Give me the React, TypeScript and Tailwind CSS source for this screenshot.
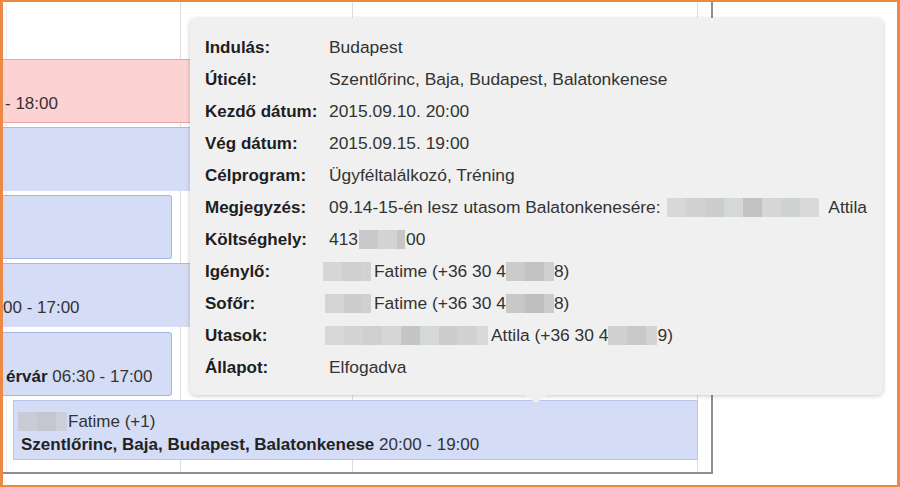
import React from 'react';

// pixelated redaction block
const Blur: React.FC<{ cells: string[]; className?: string }> = ({ cells, className = '' }) => (
  <span className={`inline-flex h-[19px] align-[-4px] ${className}`}>
    {cells.map((c, i) => (
      <span key={i} className="h-full w-[19px] shrink-0" style={{ backgroundColor: c }} />
    ))}
  </span>
);

const rows: { label: string; value: React.ReactNode }[] = [
  { label: 'Indulás:', value: 'Budapest' },
  { label: 'Úticél:', value: 'Szentlőrinc, Baja, Budapest, Balatonkenese' },
  { label: 'Kezdő dátum:', value: '2015.09.10. 20:00' },
  { label: 'Vég dátum:', value: '2015.09.15. 19:00' },
  { label: 'Célprogram:', value: 'Ügyféltalálkozó, Tréning' },
  {
    label: 'Megjegyzés:',
    value: (
      <>
        09.14-15-én lesz utasom Balatonkenesére:{' '}
        <Blur
          cells={['#d8d8d8', '#d2d2d2', '#cdcdcd', '#d4d8d8', '#c2c2c2', '#d6d6d6', '#cfd3d3', '#d9d9d9']}
          className="mx-[2px] w-[155px] overflow-hidden"
        />{' '}
        Attila
      </>
    ),
  },
  {
    label: 'Költséghely:',
    value: (
      <>
        413
        <Blur cells={['#c9c9c9', '#d3d3d3', '#c6c6c6']} className="mx-[1px] w-[46px] overflow-hidden" />
        00
      </>
    ),
  },
  {
    label: 'Igénylő:',
    value: (
      <>
        <Blur cells={['#d6d6d6', '#cfcfcf', '#d2d2d2']} className="-ml-[6px] mr-[3px] w-[48px] overflow-hidden" />
        Fatime (+36 30 4
        <Blur cells={['#cbcbcb', '#c2c2c2', '#cfcfcf']} className="w-[48px] overflow-hidden" />
        8)
      </>
    ),
  },
  {
    label: 'Sofőr:',
    value: (
      <>
        <Blur cells={['#d4d4d4', '#cdcdcd', '#d0d0d0']} className="-ml-[4px] mr-[3px] w-[46px] overflow-hidden" />
        Fatime (+36 30 4
        <Blur cells={['#c8c8c8', '#bfbfbf', '#cccccc']} className="w-[48px] overflow-hidden" />
        8)
      </>
    ),
  },
  {
    label: 'Utasok:',
    value: (
      <>
        <Blur
          cells={['#d8d8d8', '#d3d3d3', '#cfcfcf', '#d6d6d6', '#c5c5c5', '#d4d8d8', '#cdcdcd', '#d2d2d2', '#d9d9d9']}
          className="-ml-[4px] mr-[3px] w-[163px] overflow-hidden"
        />
        Attila (+36 30 4
        <Blur cells={['#d0d0d0', '#c9c9c9', '#d3d3d3']} className="w-[49px] overflow-hidden" />
        9)
      </>
    ),
  },
  { label: 'Állapot:', value: 'Elfogadva' },
];

const App: React.FC = () => {
  return (
    <div className="relative h-[487px] w-[900px] overflow-hidden border-t-2 border-l-[3px] border-r-[3px] border-b-2 border-[#ec8a45] bg-white font-['Liberation_Sans',Arial,sans-serif] text-[17px] leading-[23px]">
      {/* calendar */}
      <div className="relative h-[472px] w-[710px] overflow-hidden border-r-2 border-b-2 border-[#8e8e8e]">
        {/* grid lines */}
        <div className="absolute top-0 bottom-0 left-[3px] w-px bg-[#eeeeee]" />
        <div className="absolute top-0 bottom-0 left-[177px] w-px bg-[#dddddd]" />
        <div className="absolute top-0 bottom-0 left-[349px] w-px bg-[#dddddd]" />
        <div className="absolute top-0 bottom-0 left-[694px] w-px bg-[#dddddd]" />

        <div className="relative flex flex-col text-[#333]">
          <div className="h-[57px]" />

          <div className="h-[64px] w-[340px] border-y border-[#f0a3a3] bg-[#fdd2d2] pt-[9px] pl-[2px]">
            <div className="h-[23px]" />
            <div>- 18:00</div>
          </div>

          <div className="mt-[4px] h-[64px] w-[340px] border-t border-[#aabbe8] bg-[#d5ddf6]" />

          <div className="mt-[4px] h-[64px] w-[169px] rounded-r-[3px] border border-l-0 border-[#a5b6e6] bg-[#d5ddf6]" />

          <div className="mt-[4px] h-[64px] w-[340px] border-t border-[#aabbe8] bg-[#d5ddf6] pt-[9px]">
            <div className="h-[23px]" />
            <div>00 - 17:00</div>
          </div>

          <div className="mt-[5px] h-[64px] w-[169px] rounded-r-[3px] border border-l-0 border-[#a5b6e6] bg-[#d5ddf6] pt-[9px] pl-[3px]">
            <div className="h-[23px]" />
            <div className="whitespace-nowrap">
              <b className="text-[#222]">érvár</b> 06:30 - 17:00
            </div>
          </div>

          <div className="mt-[4px] ml-[10px] h-[60px] w-[685px] border border-[#b9c5ea] bg-[#d5ddf6] pt-[9px] pl-[4px]">
            <div className="whitespace-nowrap">
              <Blur cells={['#c9ccd6', '#c4c7d1', '#cdd0da']} className="mr-[1px] w-[49px] overflow-hidden" />
              Fatime (+1)
            </div>
            <div className="whitespace-nowrap pl-[3px]">
              <b className="text-[#222]">Szentlőrinc, Baja, Budapest, Balatonkenese</b> 20:00 - 19:00
            </div>
          </div>
        </div>
      </div>

      {/* tooltip */}
      <div className="absolute left-[187px] top-[16px] h-[377px] w-[693px] rounded-[6px] bg-[#f0f0f0] pt-[13px] pl-[15px] shadow-[0_1px_4px_rgba(0,0,0,0.22)]">
        {rows.map((r) => (
          <div key={r.label} className="flex h-[32px] items-center whitespace-nowrap">
            <div className="w-[124px] shrink-0 font-bold text-[#1e1e1e]">{r.label}</div>
            <div className="text-[17.4px] text-[#333]">{r.value}</div>
          </div>
        ))}
        {/* arrow */}
        <div className="absolute top-full left-[335px] h-0 w-0 border-x-[11px] border-t-[8px] border-x-transparent border-t-[#f0f0f0]" />
      </div>
    </div>
  );
};

export default App;
